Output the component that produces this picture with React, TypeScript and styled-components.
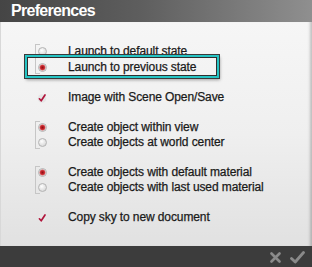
import styled, { createGlobalStyle } from 'styled-components';

const GlobalStyle = createGlobalStyle`
  html, body {
    margin: 0;
    padding: 0;
    background: #3c3c3c;
  }
  body {
    font-family: "Liberation Sans", Arial, Helvetica, sans-serif;
  }
`;

type Option = {
  label: string;
  kind: 'radio' | 'check';
  on?: boolean;
  selected?: boolean;
};

const groups: { bracket: boolean; tall?: boolean; items: Option[] }[] = [
  {
    bracket: true,
    tall: true,
    items: [
      { label: 'Launch to default state', kind: 'radio' },
      { label: 'Launch to previous state', kind: 'radio', on: true, selected: true },
    ],
  },
  { bracket: false, items: [{ label: 'Image with Scene Open/Save', kind: 'check', on: true }] },
  {
    bracket: true,
    items: [
      { label: 'Create object within view', kind: 'radio', on: true },
      { label: 'Create objects at world center', kind: 'radio' },
    ],
  },
  {
    bracket: true,
    items: [
      { label: 'Create objects with default material', kind: 'radio', on: true },
      { label: 'Create objects with last used material', kind: 'radio' },
    ],
  },
  { bracket: false, items: [{ label: 'Copy sky to new document', kind: 'check', on: true }] },
];

const CheckMark = () => (
  <svg width="10" height="10" viewBox="0 0 10 10">
    <circle cx="5" cy="5.5" r="4.3" fill="#e6e6e6" />
    <path d="M2.4 5.8 L4.2 7.8 L8 2" fill="none" stroke="#b0163c" strokeWidth="1.7" strokeLinecap="round" strokeLinejoin="round" />
  </svg>
);

const CloseIcon = () => (
  <svg width="11" height="11" viewBox="0 0 11 11">
    <path d="M1.5 1.5 L9.5 9.5 M9.5 1.5 L1.5 9.5" stroke="#8a8a8a" strokeWidth="2.6" strokeLinecap="round" />
  </svg>
);

const OkIcon = () => (
  <svg width="15" height="13" viewBox="0 0 15 13">
    <path d="M1.5 7.5 L5.2 11 L13.5 1.5" fill="none" stroke="#8a8a8a" strokeWidth="2.8" strokeLinecap="round" strokeLinejoin="round" />
  </svg>
);

const App = () => (
  <Window>
    <GlobalStyle />
    <TitleBar>Preferences</TitleBar>
    <Body>
      {groups.map((group, gi) => (
        <Group key={gi} $bracket={group.bracket}>
          {group.items.map((item) => (
            <Row key={item.label} $tall={group.tall} $selected={item.selected}>
              <Indicator>
                {item.kind === 'radio' ? <Radio $on={item.on} /> : <CheckMark />}
              </Indicator>
              <Label>{item.label}</Label>
            </Row>
          ))}
        </Group>
      ))}
    </Body>
    <Footer>
      <IconButton><CloseIcon /></IconButton>
      <IconButton><OkIcon /></IconButton>
    </Footer>
  </Window>
);

export default App;

const Window = styled.div`
  width: 312px;
  height: 267px;
  display: flex;
  flex-direction: column;
  overflow: hidden;
`;

const TitleBar = styled.div`
  height: 22px;
  flex-shrink: 0;
  box-sizing: border-box;
  padding: 2px 0 0 11px;
  background: linear-gradient(to right, #454545 0%, #5e5e5e 45%, #8f8f8f 100%);
  color: #ffffff;
  font-size: 16px;
  font-weight: bold;
  letter-spacing: -0.7px;
  line-height: 18px;
`;

const Body = styled.div`
  flex: 1;
  display: flex;
  flex-direction: column;
  gap: 15px;
  padding-top: 21px;
  background: linear-gradient(to bottom, #f6f6f6 0%, #efefef 50%, #e1e1e1 100%);
  box-shadow: inset -4px 0 3px -2px rgba(0, 0, 0, 0.22), inset 1px 0 0 #d8d8d8;
`;

const Group = styled.div<{ $bracket: boolean }>`
  position: relative;
  display: flex;
  flex-direction: column;

  &::before {
    content: '';
    display: ${(p) => (p.$bracket ? 'block' : 'none')};
    position: absolute;
    left: 35px;
    top: 1px;
    bottom: 1px;
    width: 4px;
    border: 1px solid #c6c6c6;
    border-right: none;
  }
`;

const Row = styled.div<{ $tall?: boolean; $selected?: boolean }>`
  position: relative;
  height: ${(p) => (p.$tall ? 16 : 15)}px;
  display: flex;
  align-items: center;
  padding-left: 37px;

  &::after {
    content: '';
    display: ${(p) => (p.$selected ? 'block' : 'none')};
    position: absolute;
    left: 25px;
    width: 190px;
    top: -4px;
    bottom: -3px;
    border: 2px solid #26c4c4;
    box-shadow: 0 0 0 1px #3a3a3a, inset 0 0 0 1px #2e2e2e, 1px 2px 3px rgba(0, 0, 0, 0.35);
  }
`;

const Indicator = styled.div`
  width: 10px;
  height: 10px;
  display: flex;
  align-items: center;
  justify-content: center;
  margin-right: 21px;
`;

const Radio = styled.div<{ $on?: boolean }>`
  width: 9px;
  height: 9px;
  box-sizing: border-box;
  border-radius: 50%;
  border: 1px solid #b4b4b4;
  background: ${(p) =>
    p.$on
      ? 'radial-gradient(circle at 50% 50%, #8e0f16 0, #c8262c 1.8px, #d45a5e 2.6px, #ececec 3.4px, #d6d6d6 100%)'
      : 'radial-gradient(circle at 40% 35%, #ffffff 0, #eeeeee 2px, #cfcfcf 100%)'};
`;

const Label = styled.span`
  font-size: 12px;
  line-height: 15px;
  color: #1a1a1a;
  letter-spacing: -0.1px;
  -webkit-text-stroke: 0.25px #1a1a1a;
  white-space: nowrap;
`;

const Footer = styled.div`
  height: 21px;
  flex-shrink: 0;
  display: flex;
  align-items: center;
  justify-content: flex-end;
  gap: 9px;
  padding-right: 7px;
  background: #3c3c3c;
`;

const IconButton = styled.div`
  display: flex;
  align-items: center;
  justify-content: center;
  padding-top: 2px;
`;
